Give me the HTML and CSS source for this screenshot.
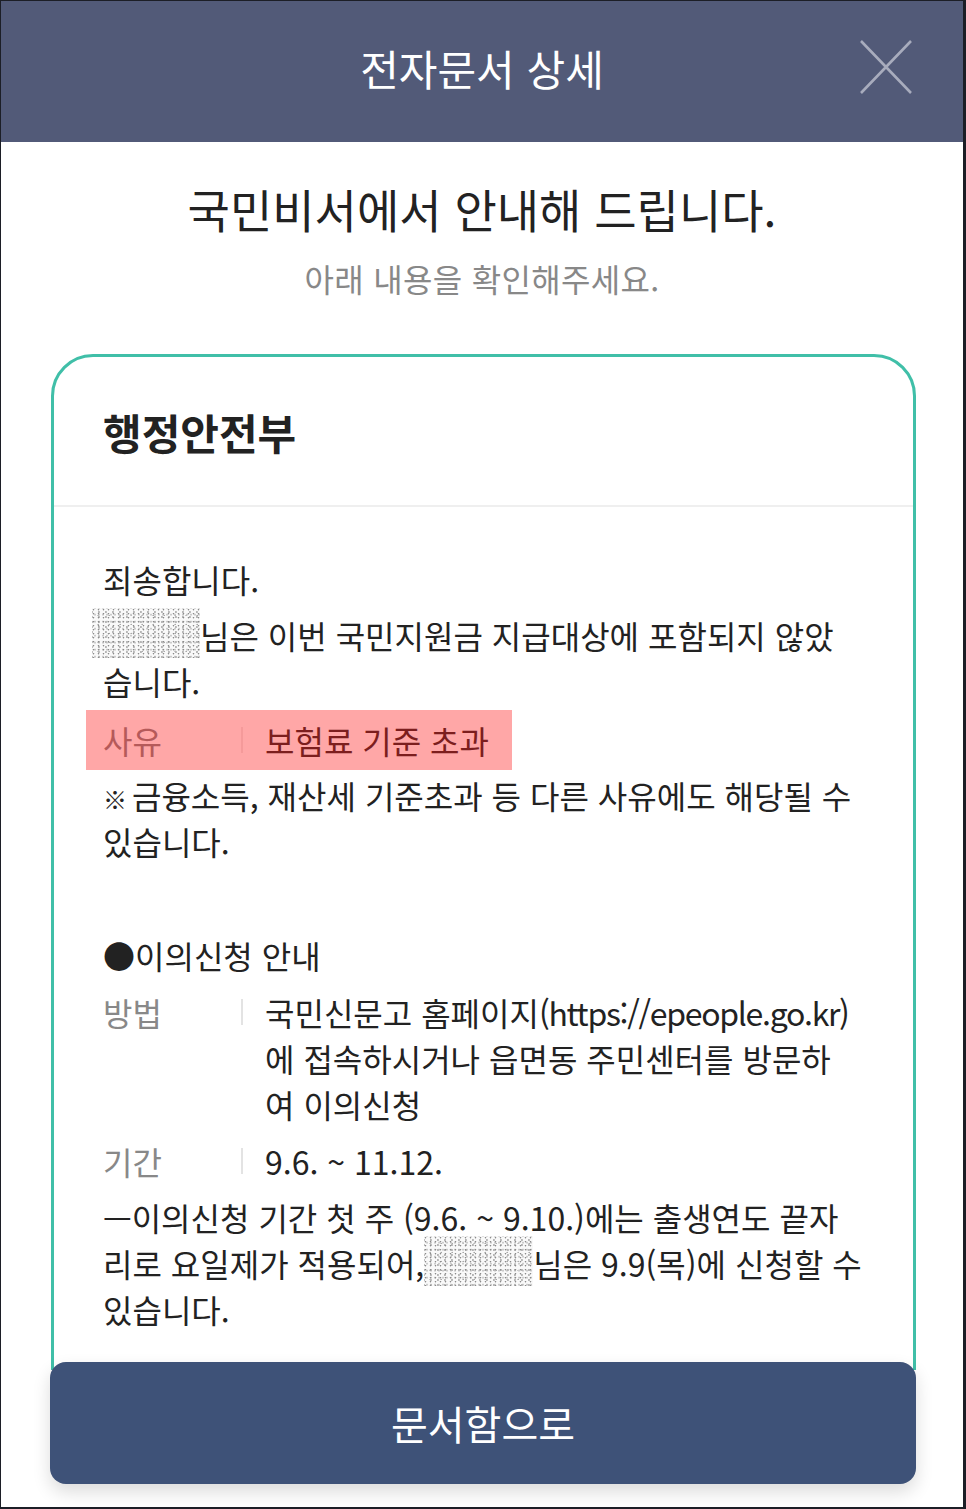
FILE: index.html
```html
<!DOCTYPE html>
<html lang="ko">
<head>
<meta charset="utf-8">
<title>전자문서 상세</title>
<link rel="stylesheet" href="styles.css">
</head>
<body>
<div class="frame">
  <header class="topbar">
    <h1 class="topbar-title">전자문서 상세</h1>
    <button class="close" aria-label="닫기">
      <svg width="52" height="54" viewBox="0 0 52 54"><path d="M1 1 L51 53 M51 1 L1 53" stroke="#a8acbd" stroke-width="2.6" fill="none"/></svg>
    </button>
  </header>

  <section class="intro">
    <h2 class="intro-title">국민비서에서 안내해 드립니다.</h2>
    <p class="intro-sub">아래 내용을 확인해주세요.</p>
  </section>

  <section class="card">
    <div class="card-head">행정안전부</div>
    <div class="card-body">
      <p class="line first">죄송합니다.</p>
      <p class="line"><span class="blur blur-a"></span>님은 이번 국민지원금 지급대상에 포함되지 않았<br>습니다.</p>
      <div class="row highlight">
        <span class="label">사유</span>
        <span class="sep"></span>
        <span class="value">보험료 기준 초과</span>
      </div>
      <p class="line note"><span class="mark">※</span> 금융소득, 재산세 기준초과 등 다른 사유에도 해당될 수<br>있습니다.</p>

      <p class="line section">●이의신청 안내</p>
      <div class="row">
        <span class="label">방법</span>
        <span class="sep"></span>
        <span class="value">국민신문고 홈페이지<span class="latin">(https://epeople.go.kr)</span><br>에 접속하시거나 읍면동 주민센터를 방문하<br>여 이의신청</span>
      </div>
      <div class="row">
        <span class="label">기간</span>
        <span class="sep"></span>
        <span class="value">9.6. ~ 11.12.</span>
      </div>
      <p class="line">—이의신청 기간 첫 주 (9.6. ~ 9.10.)에는 출생연도 끝자<br>리로 요일제가 적용되어,<span class="blur blur-b"></span>님은 9.9(목)에 신청할 수<br>있습니다.</p>
    </div>
  </section>

  <footer class="footer">
    <button class="cta">문서함으로</button>
  </footer>
</div>
</body>
</html>
```
FILE: styles.css
```css
* { box-sizing: border-box; }
html, body { margin: 0; padding: 0; background: #fff; }
body {
  font-family: "Noto Sans CJK KR", "Noto Sans", sans-serif;
  color: #222;
}
.frame {
  position: relative;
  width: 966px;
  height: 1509px;
  overflow: hidden;
  border-style: solid;
  border-color: #1c1e26;
  border-width: 1px 3px 2px 1px;
  background: #fff;
}
.topbar {
  position: relative;
  height: 141px;
  background: #525a78;
  display: flex;
  align-items: center;
  justify-content: center;
  padding-bottom: 8px;
}
.topbar-title {
  margin: 0;
  font-size: 42px;
  font-weight: 400;
  letter-spacing: 0;
  color: #fff;
  line-height: 50px;
}
.close {
  position: absolute;
  right: 51px;
  top: 39px;
  width: 52px;
  height: 54px;
  padding: 0;
  border: 0;
  background: transparent;
}
.close svg { display: block; }

.intro {
  padding-top: 36px;
  text-align: center;
}
.intro-title {
  margin: 0;
  font-size: 46px;
  font-weight: 400;
  line-height: 60px;
  letter-spacing: 0;
  color: #222;
}
.intro-sub {
  margin: 18px 0 0;
  font-size: 32px;
  line-height: 44px;
  letter-spacing: 0.3px;
  color: #888;
}

.card {
  margin: 54px 0 0 50px;
  width: 865px;
  border: 3px solid #40bfa8;
  border-radius: 42px;
  padding-bottom: 300px;
}
.card-head {
  height: 150px;
  padding: 45px 0 0 49px;
  font-size: 42px;
  font-weight: 700;
  line-height: 60px;
  letter-spacing: 0;
  color: #222;
  border-bottom: 2px solid #efefef;
}
.card-body {
  padding: 49px 0 0 49px;
  font-size: 32px;
  letter-spacing: 0;
  line-height: 46px;
  color: #222;
}
.line { margin: 10px 0 0; white-space: nowrap; }
.line.first { margin-top: 0; }
.line.note { margin-top: 2px; }
.line.section { margin-top: 68px; }
.mark { font-size: 24px; line-height: 0; letter-spacing: -4px; }

.row {
  display: grid;
  grid-template-columns: 138px 2px auto;
  margin-top: 11px;
  white-space: nowrap;
}
.label { color: #888; }
.sep {
  width: 2px;
  height: 26px;
  margin-top: 10px;
  background: #e3e3e3;
}
.value { padding-left: 22px; color: #222; }
.latin { letter-spacing: -1.3px; }

.row.highlight {
  width: 426px;
  height: 60px;
  margin: 6px 0 0 -17px;
  padding-left: 17px;
  align-items: center;
  background: #ffa7a7;
}
.row.highlight .label { color: #b55a5a; }
.row.highlight .sep { margin-top: 0; background: #f59a9a; }
.row.highlight .value { color: #7c1e1e; }

.blur {
  display: inline-block;
  vertical-align: top;
  height: 50px;
  margin-top: -4px;
  margin-bottom: -4px;
  background-color: #f8f8f8;
  background-image:
    radial-gradient(circle at 30% 40%, #777 0.6px, transparent 1.1px),
    radial-gradient(circle at 70% 20%, #aaa 0.7px, transparent 1.2px),
    radial-gradient(circle at 50% 80%, #c4c4c4 0.8px, transparent 1.3px),
    radial-gradient(circle at 20% 60%, #999 0.5px, transparent 1px);
  background-size: 5px 4px, 7px 5px, 4px 7px, 11px 9px;
  background-position: 0 0, 2px 3px, 1px 1px, 4px 2px;
  opacity: 0.85;
}
.blur-a { width: 108px; margin-left: -11px; }
.blur-b { width: 109px; }

.footer {
  position: absolute;
  left: 0;
  right: 0;
  top: 1361px;
  bottom: 0;
  padding: 0 48px 0 49px;
  background: linear-gradient(transparent 0 8px, #fff 8px);
}
.cta {
  display: block;
  width: 866px;
  height: 122px;
  border: 0;
  border-radius: 16px;
  background: #3e5278;
  color: #fff;
  font-family: "Noto Sans CJK KR", "Noto Sans", sans-serif;
  font-size: 40px;
  font-weight: 400;
  letter-spacing: 0;
  box-shadow: 0 8px 18px rgba(0, 0, 0, 0.14);
}
```
